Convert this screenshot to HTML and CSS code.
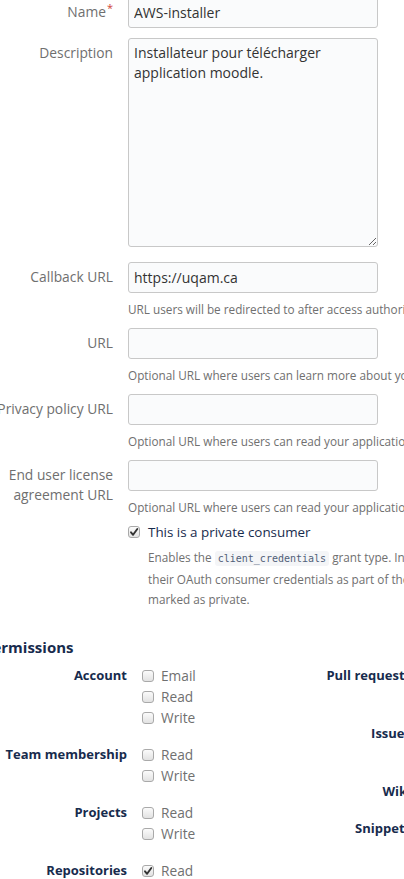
FILE: index.html
```html
<!DOCTYPE html>
<html lang="en">
<head>
<meta charset="utf-8">
<title>Consumer settings</title>
<link rel="stylesheet" href="styles.css">
</head>
<body>
<div class="page">
  <form class="form">
    <div class="field field-name">
      <label class="label">Name<span class="req">*</span></label>
      <div class="control"><input class="input" type="text" value="AWS-installer"></div>
    </div>
    <div class="field field-desc">
      <label class="label">Description</label>
      <div class="control"><textarea class="textarea">Installateur pour télécharger
application moodle.</textarea></div>
    </div>
    <div class="field">
      <label class="label">Callback URL</label>
      <div class="control">
        <input class="input" type="text" value="https://uqam.ca">
        <p class="help">URL users will be redirected to after access authorization.</p>
      </div>
    </div>
    <div class="field">
      <label class="label">URL</label>
      <div class="control">
        <input class="input" type="text">
        <p class="help">Optional URL where users can learn more about your application.</p>
      </div>
    </div>
    <div class="field">
      <label class="label label-nowrap"><span>Privacy policy URL</span></label>
      <div class="control">
        <input class="input" type="text">
        <p class="help">Optional URL where users can read your application's privacy policy.</p>
      </div>
    </div>
    <div class="field field-last">
      <label class="label">End user license agreement URL</label>
      <div class="control">
        <input class="input" type="text">
        <p class="help">Optional URL where users can read your application's license agreement.</p>
      </div>
    </div>
    <div class="private">
      <div class="check-row">
        <span class="cb"><svg viewBox="0 0 12 12" width="12" height="12"><path d="M3 6.3 L5.1 8.8 L9.3 3" fill="none" stroke="#333" stroke-width="1.9" stroke-linecap="round" stroke-linejoin="round"/></svg></span>
        <span class="check-label">This is a private consumer</span>
      </div>
      <p class="private-desc">Enables the <code class="code">client_credentials</code> grant type. In this flow, consumers authenticate using<br>their OAuth consumer credentials as part of the request. Only available to consumers<br>marked as private.</p>
    </div>

    <h3 class="perm-title">Permissions</h3>
    <div class="perms">
      <div class="perm-col">
        <div class="perm-group">
          <div class="perm-name">Account</div>
          <div class="perm-opts">
            <div class="opt"><span class="cb"></span><span>Email</span></div>
            <div class="opt"><span class="cb"></span><span>Read</span></div>
            <div class="opt"><span class="cb"></span><span>Write</span></div>
          </div>
        </div>
        <div class="perm-group">
          <div class="perm-name">Team membership</div>
          <div class="perm-opts">
            <div class="opt"><span class="cb"></span><span>Read</span></div>
            <div class="opt"><span class="cb"></span><span>Write</span></div>
          </div>
        </div>
        <div class="perm-group">
          <div class="perm-name">Projects</div>
          <div class="perm-opts">
            <div class="opt"><span class="cb"></span><span>Read</span></div>
            <div class="opt"><span class="cb"></span><span>Write</span></div>
          </div>
        </div>
        <div class="perm-group">
          <div class="perm-name">Repositories</div>
          <div class="perm-opts">
            <div class="opt"><span class="cb"><svg viewBox="0 0 12 12" width="12" height="12"><path d="M3 6.3 L5.1 8.8 L9.3 3" fill="none" stroke="#333" stroke-width="1.9" stroke-linecap="round" stroke-linejoin="round"/></svg></span><span>Read</span></div>
            <div class="opt"><span class="cb"></span><span>Write</span></div>
            <div class="opt"><span class="cb"></span><span>Admin</span></div>
            <div class="opt"><span class="cb"></span><span>Delete</span></div>
          </div>
        </div>
      </div>
      <div class="perm-col">
        <div class="perm-group">
          <div class="perm-name">Pull requests</div>
          <div class="perm-opts">
            <div class="opt"><span class="cb"></span><span>Read</span></div>
            <div class="opt"><span class="cb"></span><span>Write</span></div>
          </div>
        </div>
        <div class="perm-group">
          <div class="perm-name">Issues</div>
          <div class="perm-opts">
            <div class="opt"><span class="cb"></span><span>Read</span></div>
            <div class="opt"><span class="cb"></span><span>Write</span></div>
          </div>
        </div>
        <div class="perm-group">
          <div class="perm-name">Wiki</div>
          <div class="perm-opts">
            <div class="opt"><span class="cb"></span><span>Read and write</span></div>
          </div>
        </div>
        <div class="perm-group">
          <div class="perm-name">Snippets</div>
          <div class="perm-opts">
            <div class="opt"><span class="cb"></span><span>Read</span></div>
            <div class="opt"><span class="cb"></span><span>Write</span></div>
          </div>
        </div>
        <div class="perm-group">
          <div class="perm-name">Webhooks</div>
          <div class="perm-opts">
            <div class="opt"><span class="cb"></span><span>Read and write</span></div>
          </div>
        </div>
      </div>
    </div>
  </form>
</div>
</body>
</html>
```

FILE: styles.css
```css
html, body {
  margin: 0;
  padding: 0;
  background: #ffffff;
  overflow: hidden;
}

body {
  font-family: "Open Sans", "Noto Sans", sans-serif;
  font-size: 14px;
  color: #333333;
}

.page {
  width: 820px;
}

.form {
  margin-top: -3px;
}

.field {
  display: grid;
  grid-template-columns: 113px 1fr;
  column-gap: 15px;
  margin-bottom: 9px;
}

.field-name {
  margin-bottom: 10px;
}

.field-desc {
  margin-bottom: 15px;
}

.field-last {
  margin-bottom: 5px;
}

.label {
  text-align: right;
  color: #6f6f6f;
  font-size: 13.8px;
  line-height: 20px;
  padding-top: 5px;
}

.label-nowrap {
  display: flex;
  justify-content: flex-end;
  align-items: flex-start;
  white-space: nowrap;
}

.label-nowrap span {
  flex: none;
}

.req {
  color: #d04437;
  font-size: 11px;
  vertical-align: top;
  position: relative;
  top: -4px;
  margin-left: 1px;
}

.control {
  min-width: 0;
}

.input,
.textarea {
  display: block;
  box-sizing: border-box;
  width: 250px;
  margin: 0;
  border: 1px solid #c8c8c8;
  border-radius: 3px;
  background: #fafbfc;
  font-family: inherit;
  font-size: 14px;
  color: #333333;
  padding: 0 5px;
}

.input {
  height: 31px;
}

.textarea {
  height: 209px;
  padding: 4px 5px;
  line-height: 20px;
  resize: vertical;
}

.help {
  margin: 6px 0 0;
  font-size: 11.75px;
  line-height: 20px;
  color: #707070;
  white-space: nowrap;
}

.private {
  margin-left: 128px;
}

.check-row {
  display: flex;
  align-items: center;
  gap: 8px;
  line-height: 20px;
}

.check-label {
  color: #172b4d;
  font-size: 13.4px;
}

.cb {
  flex: none;
  display: inline-flex;
  box-sizing: border-box;
  width: 12px;
  height: 12px;
  border: 1px solid #a9a9a9;
  border-radius: 3px;
  background: linear-gradient(#fbfbfb, #e2e2e2);
}

.cb svg {
  display: block;
  margin: -1px;
}

.private-desc {
  margin: 5px 0 0 20px;
  font-size: 11.75px;
  line-height: 20px;
  color: #707070;
  white-space: nowrap;
}

.code {
  font-family: "DejaVu Sans Mono", monospace;
  font-size: 10px;
  background: #f4f5f7;
  color: #505f79;
  border-radius: 3px;
  padding: 2px 3px;
}

.perm-title {
  margin: 28px 0 0 -17px;
  font-size: 15px;
  line-height: 20px;
  font-weight: 700;
  color: #172b4d;
}

.perms {
  display: grid;
  grid-template-columns: 284px 291px;
  margin-top: 8px;
}

.perm-group {
  display: grid;
  grid-template-columns: 127px 1fr;
  column-gap: 15px;
  margin-bottom: 16px;
}

.perm-name {
  text-align: right;
  font-size: 13px;
  font-weight: 700;
  color: #172b4d;
  line-height: 21px;
  white-space: nowrap;
}

.opt {
  display: flex;
  align-items: center;
  gap: 7px;
  height: 21px;
  font-size: 13.7px;
  color: #707070;
  white-space: nowrap;
}
```
